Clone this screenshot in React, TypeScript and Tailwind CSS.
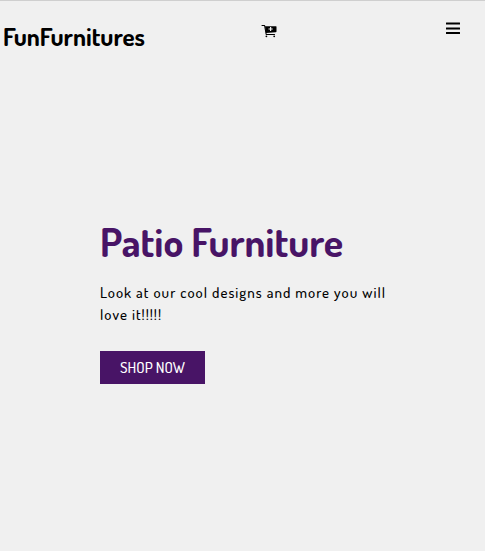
function CartPlusIcon() {
  return (
    <svg className="h-4 w-4" viewBox="0 0 16 16" fill="none" stroke="black" aria-hidden="true">
      <path d="M1 2.5H3.6L5.2 11.5H13.5" strokeWidth="1.1" strokeLinecap="round" strokeLinejoin="round" />
      <path
        fill="black"
        stroke="none"
        fillRule="evenodd"
        d="M4 3.2H15Q15.6 3.2 15.5 3.9V8.6Q15.4 9.2 14.8 9.3L5 10.1ZM9 4V5.4H7.5V6.6H9V8H10.2V6.6H11.7V5.4H10.2V4Z"
      />
      <circle cx="5.4" cy="13.3" r="0.9" fill="black" stroke="none" />
      <circle cx="13.2" cy="13.3" r="0.9" fill="black" stroke="none" />
    </svg>
  );
}

function BarsIcon() {
  return (
    <svg className="h-4 w-4" viewBox="0 0 16 16" fill="black" aria-hidden="true">
      <rect x="1" y="1.5" width="14" height="2.1" rx="0.3" />
      <rect x="1" y="6.4" width="14" height="2.1" rx="0.3" />
      <rect x="1" y="11" width="14" height="2" rx="0.3" />
    </svg>
  );
}

export default function App() {
  return (
    <div className="min-h-screen border-t border-[#cfcfcf] bg-[#f0f0f0] font-['Dosis','Lato',sans-serif] text-black">
      <header className="flex items-start justify-between pt-5 pr-6 pl-[3px]">
        <a href="#" className="text-[25px] leading-[30px] font-bold">
          FunFurnitures
        </a>
        <button type="button" aria-label="Cart" className="pt-0.5">
          <CartPlusIcon />
        </button>
        <button type="button" aria-label="Menu" className="ml-13">
          <BarsIcon />
        </button>
      </header>
      <main className="pt-[166px] pr-6 pl-25">
        <h1 className="text-[40px] leading-12 font-bold whitespace-nowrap text-[#481466]">Patio Furniture</h1>
        <p className="mt-[17px] max-w-75 text-[15px] leading-[22px] font-medium tracking-[1px]">
          Look at our cool designs and more you will love it!!!!!
        </p>
        <button type="button" className="mt-[25px] bg-[#481466] px-5 pt-1.5 pb-[5px] text-[15px] leading-[22px] font-medium text-white">
          SHOP NOW
        </button>
      </main>
    </div>
  );
}
